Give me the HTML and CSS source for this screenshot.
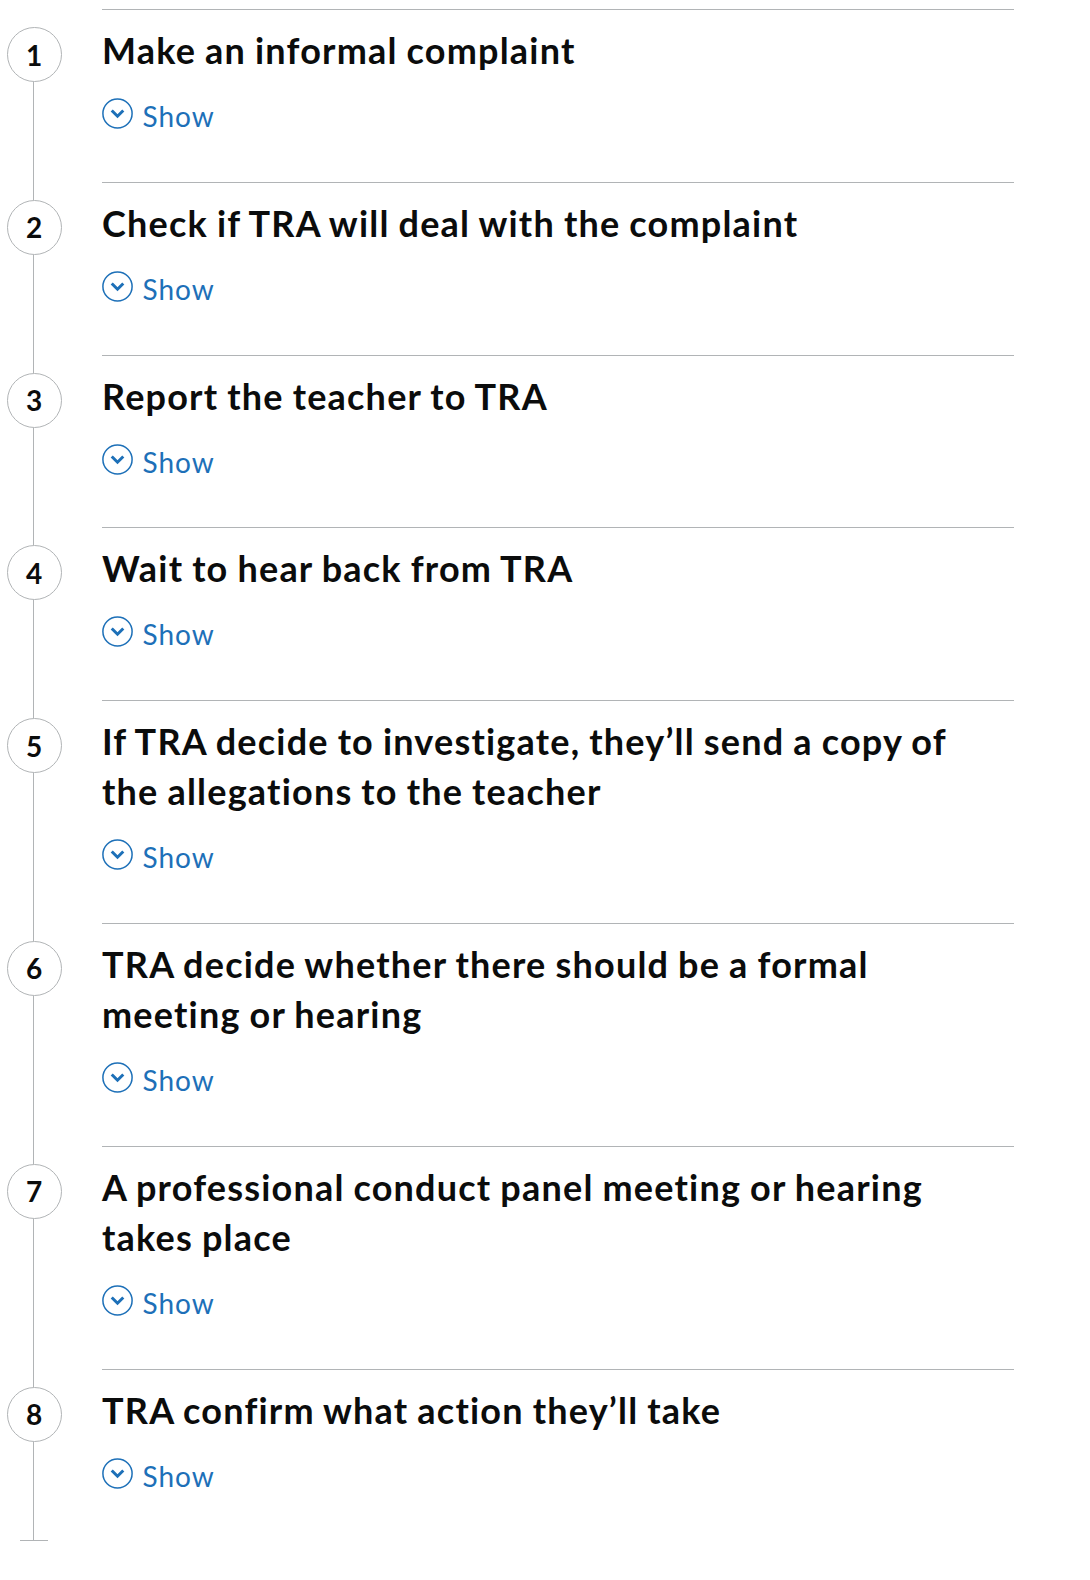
FILE: index.html
```html
<!DOCTYPE html>
<html lang="en">
<head>
<meta charset="utf-8">
<title>Step by step</title>
<link rel="stylesheet" href="styles.css">
</head>
<body>
<ol class="step-nav">
  <li class="step step--first">
    <div class="step__rail"><span class="rail-seg rail-seg--top"></span><span class="step__circle">1</span><span class="rail-seg rail-seg--fill"></span></div>
    <div class="step__body">
      <h2 class="step__title">Make an informal complaint</h2>
      <button class="step__toggle" type="button"><svg class="chev" width="31" height="31" viewBox="0 0 31 31" aria-hidden="true"><circle cx="15.5" cy="15.5" r="14.6" fill="none" stroke="#1d70b8" stroke-width="1.5"/><polyline points="10.8,13.6 15.5,18.2 20.2,13.6" fill="none" stroke="#1d70b8" stroke-width="3" stroke-linecap="square"/></svg><span>Show</span></button>
    </div>
  </li>
  <li class="step">
    <div class="step__rail"><span class="rail-seg rail-seg--top"></span><span class="step__circle">2</span><span class="rail-seg rail-seg--fill"></span></div>
    <div class="step__body">
      <h2 class="step__title">Check if TRA will deal with the complaint</h2>
      <button class="step__toggle" type="button"><svg class="chev" width="31" height="31" viewBox="0 0 31 31" aria-hidden="true"><circle cx="15.5" cy="15.5" r="14.6" fill="none" stroke="#1d70b8" stroke-width="1.5"/><polyline points="10.8,13.6 15.5,18.2 20.2,13.6" fill="none" stroke="#1d70b8" stroke-width="3" stroke-linecap="square"/></svg><span>Show</span></button>
    </div>
  </li>
  <li class="step">
    <div class="step__rail"><span class="rail-seg rail-seg--top"></span><span class="step__circle">3</span><span class="rail-seg rail-seg--fill"></span></div>
    <div class="step__body">
      <h2 class="step__title">Report the teacher to TRA</h2>
      <button class="step__toggle" type="button"><svg class="chev" width="31" height="31" viewBox="0 0 31 31" aria-hidden="true"><circle cx="15.5" cy="15.5" r="14.6" fill="none" stroke="#1d70b8" stroke-width="1.5"/><polyline points="10.8,13.6 15.5,18.2 20.2,13.6" fill="none" stroke="#1d70b8" stroke-width="3" stroke-linecap="square"/></svg><span>Show</span></button>
    </div>
  </li>
  <li class="step">
    <div class="step__rail"><span class="rail-seg rail-seg--top"></span><span class="step__circle">4</span><span class="rail-seg rail-seg--fill"></span></div>
    <div class="step__body">
      <h2 class="step__title">Wait to hear back from TRA</h2>
      <button class="step__toggle" type="button"><svg class="chev" width="31" height="31" viewBox="0 0 31 31" aria-hidden="true"><circle cx="15.5" cy="15.5" r="14.6" fill="none" stroke="#1d70b8" stroke-width="1.5"/><polyline points="10.8,13.6 15.5,18.2 20.2,13.6" fill="none" stroke="#1d70b8" stroke-width="3" stroke-linecap="square"/></svg><span>Show</span></button>
    </div>
  </li>
  <li class="step">
    <div class="step__rail"><span class="rail-seg rail-seg--top"></span><span class="step__circle">5</span><span class="rail-seg rail-seg--fill"></span></div>
    <div class="step__body">
      <h2 class="step__title">If TRA decide to investigate, they’ll send a copy of the allegations to the teacher</h2>
      <button class="step__toggle" type="button"><svg class="chev" width="31" height="31" viewBox="0 0 31 31" aria-hidden="true"><circle cx="15.5" cy="15.5" r="14.6" fill="none" stroke="#1d70b8" stroke-width="1.5"/><polyline points="10.8,13.6 15.5,18.2 20.2,13.6" fill="none" stroke="#1d70b8" stroke-width="3" stroke-linecap="square"/></svg><span>Show</span></button>
    </div>
  </li>
  <li class="step">
    <div class="step__rail"><span class="rail-seg rail-seg--top"></span><span class="step__circle">6</span><span class="rail-seg rail-seg--fill"></span></div>
    <div class="step__body">
      <h2 class="step__title">TRA decide whether there should be a formal meeting or hearing</h2>
      <button class="step__toggle" type="button"><svg class="chev" width="31" height="31" viewBox="0 0 31 31" aria-hidden="true"><circle cx="15.5" cy="15.5" r="14.6" fill="none" stroke="#1d70b8" stroke-width="1.5"/><polyline points="10.8,13.6 15.5,18.2 20.2,13.6" fill="none" stroke="#1d70b8" stroke-width="3" stroke-linecap="square"/></svg><span>Show</span></button>
    </div>
  </li>
  <li class="step">
    <div class="step__rail"><span class="rail-seg rail-seg--top"></span><span class="step__circle">7</span><span class="rail-seg rail-seg--fill"></span></div>
    <div class="step__body">
      <h2 class="step__title">A professional conduct panel meeting or hearing takes place</h2>
      <button class="step__toggle" type="button"><svg class="chev" width="31" height="31" viewBox="0 0 31 31" aria-hidden="true"><circle cx="15.5" cy="15.5" r="14.6" fill="none" stroke="#1d70b8" stroke-width="1.5"/><polyline points="10.8,13.6 15.5,18.2 20.2,13.6" fill="none" stroke="#1d70b8" stroke-width="3" stroke-linecap="square"/></svg><span>Show</span></button>
    </div>
  </li>
  <li class="step step--last">
    <div class="step__rail"><span class="rail-seg rail-seg--top"></span><span class="step__circle">8</span><span class="rail-seg rail-seg--fill"></span><span class="rail-end"></span></div>
    <div class="step__body">
      <h2 class="step__title">TRA confirm what action they’ll take</h2>
      <button class="step__toggle" type="button"><svg class="chev" width="31" height="31" viewBox="0 0 31 31" aria-hidden="true"><circle cx="15.5" cy="15.5" r="14.6" fill="none" stroke="#1d70b8" stroke-width="1.5"/><polyline points="10.8,13.6 15.5,18.2 20.2,13.6" fill="none" stroke="#1d70b8" stroke-width="3" stroke-linecap="square"/></svg><span>Show</span></button>
    </div>
  </li>
</ol>
</body>
</html>
```

FILE: styles.css
```css
* { box-sizing: border-box; }

html, body {
  margin: 0;
  padding: 0;
  background: #ffffff;
}

body {
  font-family: Lato, "Noto Sans", "Liberation Sans", sans-serif;
  color: #0b0c0c;
}

.step-nav {
  list-style: none;
  margin: 0;
  padding: 9px 0 0 0;
  width: 1014px;
}

.step {
  display: grid;
  grid-template-columns: 67px 1fr;
  column-gap: 35px;
}

.step__rail {
  display: flex;
  flex-direction: column;
  align-items: center;
}

.rail-seg {
  width: 1px;
  background: #b1b4b6;
}

.rail-seg--top {
  height: 18px;
  flex: none;
}

.step--first .rail-seg--top {
  background: transparent;
}

.rail-seg--fill {
  flex: 1;
}

.rail-end {
  width: 28px;
  height: 1px;
  background: #b1b4b6;
  flex: none;
}

.step__circle {
  flex: none;
  width: 55px;
  height: 55px;
  border: 1px solid #b1b4b6;
  border-radius: 50%;
  background: #ffffff;
  display: flex;
  align-items: center;
  justify-content: center;
  font-weight: 700;
  font-size: 28px;
  line-height: 1;
  color: #0b0c0c;
  margin-left: 1px;
}

.step__body {
  border-top: 1px solid #b1b4b6;
  padding: 15px 0 45.8px 0;
}

.step__title {
  margin: 0;
  padding-right: 25px;
  font-size: 36px;
  line-height: 50px;
  font-weight: 700;
  letter-spacing: 1.2px;
  word-spacing: -1px;
  color: #0b0c0c;
}

.step__toggle {
  display: flex;
  align-items: flex-start;
  gap: 9.5px;
  margin: 21px 0 0 0;
  padding: 0;
  border: 0;
  background: none;
  font-family: inherit;
  font-size: 28px;
  line-height: 40px;
  letter-spacing: 1px;
  color: #1d70b8;
  cursor: pointer;
}

.chev {
  display: block;
  margin-top: 2px;
  flex: none;
}
```
